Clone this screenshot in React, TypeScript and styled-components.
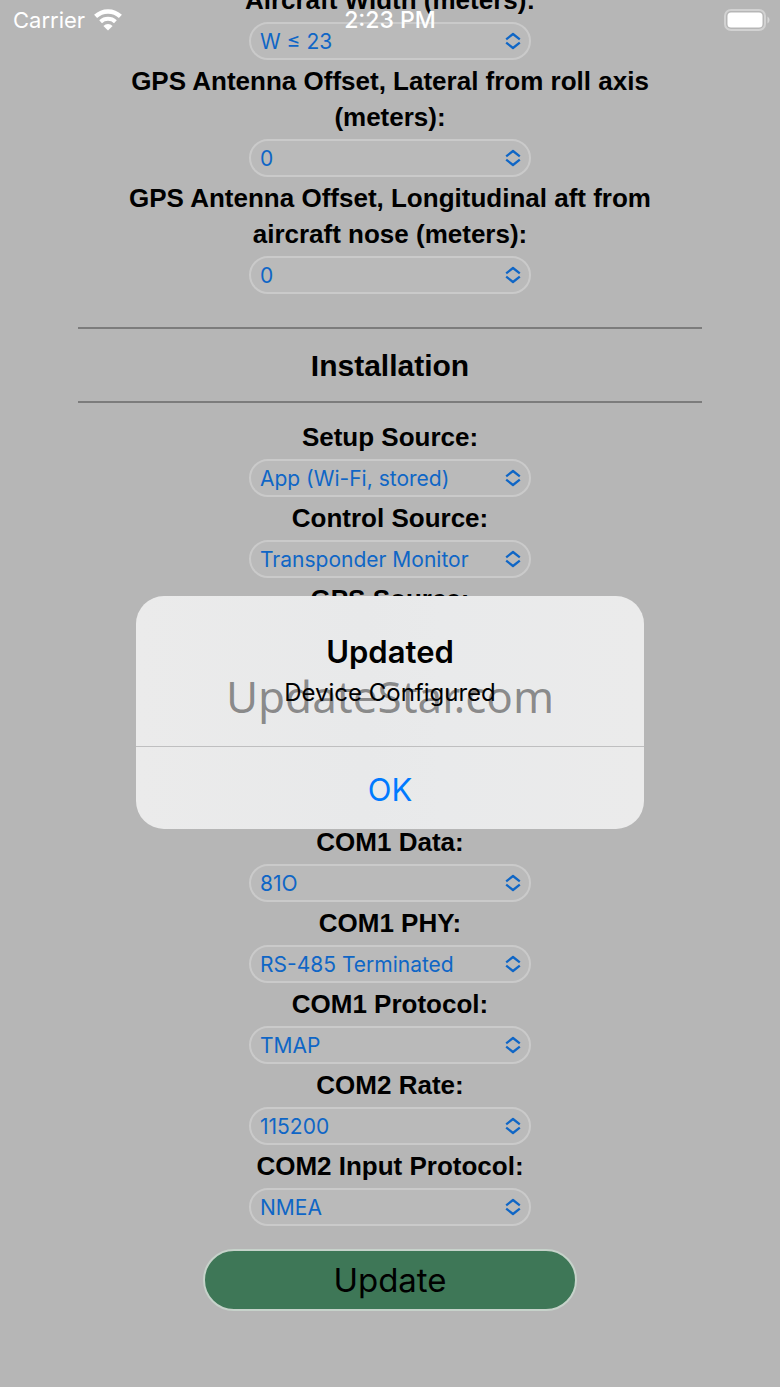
import React, { useId, useState } from "react";
import styled, { createGlobalStyle } from "styled-components";

const GlobalStyle = createGlobalStyle`
  * { box-sizing: border-box; }
  body {
    margin: 0;
    background: #b6b6b6;
    color: #000;
    font-family: Inter, "Liberation Sans", sans-serif;
  }
`;

const Page = styled.div`
  position: relative;
  min-height: 100vh;
  overflow: hidden;
`;

const StatusBar = styled.header`
  position: absolute;
  top: 0;
  left: 0;
  right: 0;
  z-index: 1;
  display: grid;
  grid-template-columns: 1fr auto 1fr;
  align-items: center;
  height: 40px;
  padding: 0 10px;
  color: #fff;
  font-size: 22px;
`;

const Carrier = styled.div`
  display: flex;
  align-items: center;
  gap: 8px;
  padding-left: 3px;
`;

const Clock = styled.time`
  font-size: 23px;
  font-weight: 500;
`;

const BatteryIcon = styled.svg`
  justify-self: end;
`;

/* The form is scrolled, so its first label is partly above the top edge. */
const Form = styled.form`
  display: flex;
  flex-direction: column;
  align-items: center;
  margin-top: -18px;
  padding: 0 10% 76px;
`;

const Fields = styled.div`
  display: flex;
  flex-direction: column;
  align-items: center;
  gap: 3px;
`;

const Field = styled.div`
  display: flex;
  flex-direction: column;
  align-items: center;
  gap: 4px;
`;

const Label = styled.label`
  max-width: 560px;
  font: bold 26px/36px "Liberation Sans", Arial, sans-serif;
  text-align: center;
`;

const SelectBox = styled.div`
  position: relative;
  width: 282px;
`;

const Select = styled.select`
  appearance: none;
  display: block;
  width: 100%;
  height: 38px;
  padding: 0 40px 0 9px;
  border: 2px solid #cacaca;
  border-radius: 19px;
  background: #bababa;
  color: #0f66c6;
  font: 21px Inter, sans-serif;
`;

const Chevrons = styled.svg`
  position: absolute;
  top: 10px;
  right: 10px;
  pointer-events: none;
`;

const SectionHead = styled.div`
  width: 100%;
  padding: 33px 0 16px;
`;

const Rule = styled.hr`
  height: 2px;
  margin: 0;
  border: 0;
  border-top: 2px solid #7c7c7c;
  border-bottom: 0;
`;

const SectionTitle = styled.h2`
  margin: 0;
  padding: 19px 0 17px;
  font: bold 30px/36px "Liberation Sans", Arial, sans-serif;
  text-align: center;
`;

const UpdateButton = styled.button`
  width: 60%;
  height: 62px;
  margin-top: 23px;
  border: 2px solid #c6d2ca;
  border-radius: 31px;
  background: #3e7757;
  color: #000;
  font: 33px Inter, sans-serif;
`;

const AlertLayer = styled.div`
  position: absolute;
  inset: 0;
  z-index: 2;
  display: grid;
  place-items: center;
  padding-top: 38px;
`;

const Alert = styled.section`
  width: 508px;
  max-width: 90%;
  overflow: hidden;
  border-radius: 28px;
  background: linear-gradient(90deg, #ebebeb, #e8e9ea 45%, #e9eaeb 60%, #ebebeb);
  text-align: center;
`;

const AlertText = styled.div`
  padding: 36px 20px 38px;
`;

const AlertTitle = styled.h1`
  margin: 0;
  font-size: 31px;
  font-weight: 600;
  line-height: 40px;
`;

const AlertMessage = styled.p`
  margin: 4px 0 0;
  font-size: 24px;
  line-height: 34px;
  margin-bottom: -2px;
`;

const AlertButton = styled.button`
  display: block;
  width: 100%;
  height: 83px;
  padding: 2px 0 0;
  border: 0;
  border-top: 1px solid #bfbfc0;
  background: transparent;
  color: #007aff;
  font: 31px Inter, sans-serif;
`;

const Watermark = styled.div`
  position: absolute;
  inset: 0;
  z-index: 3;
  display: grid;
  place-items: center;
  padding-top: 4px;
  color: rgba(0, 0, 0, 0.42);
  font: 44px "Noto Sans", sans-serif;
  pointer-events: none;
`;

type FieldData = { label: string; value: string };

const aircraftFields: FieldData[] = [
  { label: "Aircraft Width (meters):", value: "W ≤ 23" },
  { label: "GPS Antenna Offset, Lateral from roll axis (meters):", value: "0" },
  { label: "GPS Antenna Offset, Longitudinal aft from aircraft nose (meters):", value: "0" },
];

const installationFields: FieldData[] = [
  { label: "Setup Source:", value: "App (Wi-Fi, stored)" },
  { label: "Control Source:", value: "Transponder Monitor" },
  { label: "GPS Source:", value: "Internal" },
  { label: "COM1 Rate:", value: "115200" },
  { label: "COM1 Input:", value: "TMAP" },
  { label: "COM1 Data:", value: "81O" },
  { label: "COM1 PHY:", value: "RS-485 Terminated" },
  { label: "COM1 Protocol:", value: "TMAP" },
  { label: "COM2 Rate:", value: "115200" },
  { label: "COM2 Input Protocol:", value: "NMEA" },
];

function SelectField({ label, value }: FieldData) {
  const id = useId();
  return (
    <Field>
      <Label htmlFor={id}>{label}</Label>
      <SelectBox>
        <Select id={id} defaultValue={value}>
          <option>{value}</option>
        </Select>
        <Chevrons width="16" height="18" viewBox="0 0 16 18" fill="none" stroke="#0f66c6" strokeWidth="2.3" strokeLinejoin="round" aria-hidden="true">
          <path d="M1.2 7.3 8 2l6.8 5.3M1.2 10.7 8 16l6.8-5.3" />
        </Chevrons>
      </SelectBox>
    </Field>
  );
}

export default function App() {
  const [alertOpen, setAlertOpen] = useState(true);
  return (
    <Page>
      <GlobalStyle />
      <StatusBar>
        <Carrier>
          Carrier
          <svg width="30" height="22" viewBox="0 0 30 22" fill="none" stroke="#fff" strokeWidth="4.4" aria-hidden="true">
            <path d="M2.6 7.4a18 18 0 0 1 24.8 0" />
            <path d="M7.6 12.8a10.8 10.8 0 0 1 14.8 0" strokeWidth="4" />
            <path d="M15 21.5l-4.6-4.6a6.5 6.5 0 0 1 9.2 0z" fill="#fff" stroke="none" />
          </svg>
        </Carrier>
        <Clock>2:23 PM</Clock>
        <BatteryIcon width="46" height="22" viewBox="0 0 46 22" aria-hidden="true">
          <rect x="1" y="1" width="40" height="20" rx="6" fill="none" stroke="#d2d2d2" strokeWidth="2" />
          <rect x="3.5" y="3.5" width="35" height="15" rx="3.5" fill="#fff" />
          <path d="M43.5 7.5a4 4 0 0 1 0 7z" fill="#d6d6d6" />
        </BatteryIcon>
      </StatusBar>

      <Form onSubmit={(event) => { event.preventDefault(); setAlertOpen(true); }}>
        <Fields>
          {aircraftFields.map((field) => <SelectField key={field.label} {...field} />)}
        </Fields>
        <SectionHead>
          <Rule />
          <SectionTitle>Installation</SectionTitle>
          <Rule />
        </SectionHead>
        <Fields>
          {installationFields.map((field) => <SelectField key={field.label} {...field} />)}
        </Fields>
        <UpdateButton type="submit">Update</UpdateButton>
      </Form>

      {alertOpen && (
        <AlertLayer>
          <Alert role="alertdialog" aria-labelledby="alert-title" aria-describedby="alert-message">
            <AlertText>
              <AlertTitle id="alert-title">Updated</AlertTitle>
              <AlertMessage id="alert-message">Device Configured</AlertMessage>
            </AlertText>
            <AlertButton type="button" onClick={() => setAlertOpen(false)}>OK</AlertButton>
          </Alert>
        </AlertLayer>
      )}
      <Watermark>UpdateStar.com</Watermark>
    </Page>
  );
}
